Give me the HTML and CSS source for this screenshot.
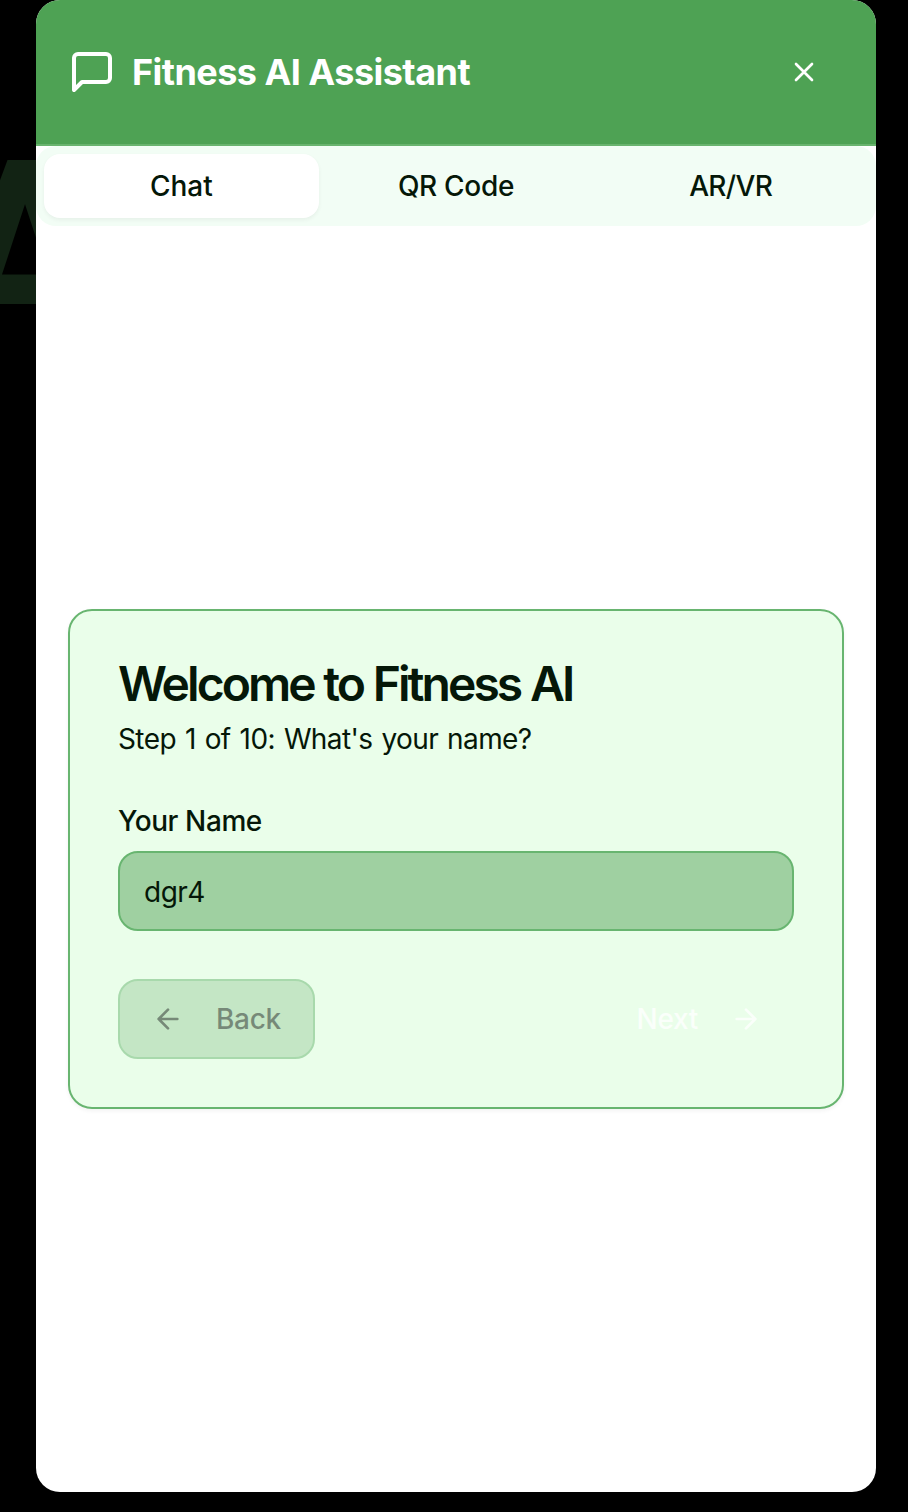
FILE: index.html
```html
<!DOCTYPE html>
<html lang="en">
<head>
<meta charset="utf-8">
<title>Fitness AI Assistant</title>
<link rel="stylesheet" href="styles.css">
</head>
<body>
<div class="backdrop" aria-hidden="true">A</div>
<main class="dialog">
  <header class="header">
    <svg class="chat-icon" viewBox="0 0 24 24"><path d="M21 15a2 2 0 0 1-2 2H7l-4 4V5a2 2 0 0 1 2-2h14a2 2 0 0 1 2 2z"/></svg>
    <h1 class="heading">Fitness AI Assistant</h1>
    <button class="close" aria-label="Close"><svg class="icon" viewBox="0 0 24 24"><path d="M18 6 6 18M6 6l12 12"/></svg></button>
  </header>
  <nav class="tabs">
    <button class="tab active"><span>Chat</span></button>
    <button class="tab"><span class="qr">QR Code</span></button>
    <button class="tab"><span class="ar">AR/VR</span></button>
  </nav>
  <section class="content">
    <form class="card">
      <h2 class="title">Welcome to Fitness AI</h2>
      <p class="description">Step 1 of 10: What's your name?</p>
      <label class="label" for="name">Your Name</label>
      <input class="input" id="name" type="text" value="dgr4">
      <div class="actions">
        <button class="button back" type="button" disabled><svg class="icon" viewBox="0 0 24 24"><path d="m12 19-7-7 7-7M19 12H5"/></svg><span>Back</span></button>
        <button class="button next" type="button"><span>Next</span><svg class="icon" viewBox="0 0 24 24"><path d="M5 12h14M12 5l7 7-7 7"/></svg></button>
      </div>
    </form>
  </section>
</main>
</body>
</html>
```
FILE: styles.css
```css
* { box-sizing: border-box; }
body {
  margin: 0;
  height: 1512px;
  overflow: hidden;
  background: #000;
  color: #051708;
  font-family: Inter, "Liberation Sans", sans-serif;
  font-size: 28px;
  line-height: 40px;
}
button { margin: 0; padding: 0; border: 0; background: none; color: inherit; font: inherit; font-weight: 500; }
svg { display: block; flex: none; fill: none; stroke: currentColor; stroke-width: 2; stroke-linecap: round; stroke-linejoin: round; }
.icon { width: 32px; height: 32px; }
.backdrop {
  position: absolute;
  left: -75px;
  top: 127px;
  width: 200px;
  text-align: center;
  font-family: Roboto, sans-serif;
  font-size: 256px;
  line-height: 256px;
  font-weight: 700;
  color: #122314;
}
.dialog {
  position: relative;
  display: flex;
  flex-direction: column;
  width: 840px;
  height: 1492px;
  margin-left: 36px;
  overflow: hidden;
  border-radius: 24px;
  background: #fff;
}
.header {
  display: flex;
  align-items: center;
  gap: 16px;
  height: 146px;
  padding: 0 32px;
  border-bottom: 2px solid #69b46e;
  background: #4ea254;
  color: #fff;
}
.chat-icon { width: 48px; height: 48px; }
.heading { margin: 0; font-size: 36px; line-height: 56px; font-weight: 700; letter-spacing: -.54px; }
.close { display: grid; place-items: center; width: 80px; height: 80px; margin-left: auto; }
.tabs {
  display: grid;
  grid-template-columns: repeat(3, 1fr);
  height: 80px;
  padding: 8px;
  border-radius: 20px;
  background: #f2fdf5;
}
.tab { border-radius: 16px; }
.qr { letter-spacing: -.3px; }
.ar { letter-spacing: -.7px; }
.active { background: #fff; box-shadow: 0 2px 4px rgba(0, 0, 0, .05); }
.content { display: flex; flex: 1; flex-direction: column; justify-content: center; padding: 0 32px; }
.card {
  display: flex;
  flex-direction: column;
  padding: 49px 48px 48px;
  border: 2px solid #68b570;
  border-radius: 24px;
  background: #eafeea;
  box-shadow: 0 2px 4px rgba(0, 0, 0, .05);
}
.title { margin: 0; font-size: 48px; line-height: 48px; font-weight: 600; letter-spacing: -2.95px; word-spacing: .5px; }
.description { margin: 11px 0 48px; letter-spacing: -.6px; word-spacing: 1.7px; }
.label { margin-bottom: 16px; line-height: 28px; font-weight: 500; letter-spacing: -.4px; }
.input {
  height: 80px;
  padding: 2px 24px 0;
  border: 2px solid #68b570;
  border-radius: 20px;
  outline: 0;
  background: #9fd0a1;
  color: inherit;
  font: inherit;
  letter-spacing: -.5px;
}
.actions { display: flex; justify-content: space-between; margin-top: 48px; }
.button { display: flex; align-items: center; gap: 32px; height: 80px; padding: 0 32px; border-radius: 20px; letter-spacing: -.3px; }
.back { border: 2px solid #68b570; background: #9fd0a1; opacity: .5; }
.next { color: #fafffa; }
```
